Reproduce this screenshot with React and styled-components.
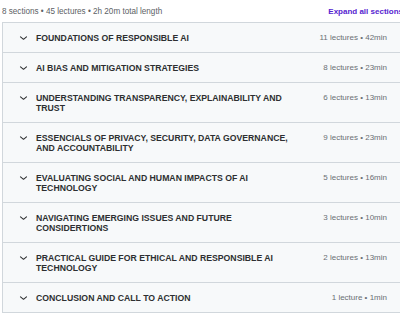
import React from "react";
import styled, { createGlobalStyle } from "styled-components";

const GlobalStyle = createGlobalStyle`
  html, body {
    margin: 0;
    padding: 0;
    background: #ffffff;
    overflow: hidden;
  }

  body {
    font-family: "Liberation Sans", Arial, sans-serif;
    color: #2d2f31;
  }
`;

const Page = styled.div`
  width: 401px;
  padding-left: 2px;
`;

const SummaryBar = styled.div`
  height: 22px;
  display: flex;
  align-items: center;
  justify-content: space-between;
`;

const SummaryText = styled.span`
  font-size: 8.15px;
  color: #5c6165;
`;

const ExpandBtn = styled.button`
  margin: 0;
  padding: 0;
  border: none;
  background: none;
  font-family: inherit;
  font-size: 8px;
  font-weight: 700;
  color: #5624d0;
  cursor: pointer;
`;

const SectionList = styled.div`
  border: 1px solid #d1d7dc;
  border-top: none;
`;

const SectionHeader = styled.div`
  display: flex;
  align-items: flex-start;
  padding: 9.5px 15px 9.5px 16px;
  border-top: 1px solid #d1d7dc;
  background-color: #f7f9fa;
`;

const Chevron = styled.svg`
  flex: none;
  width: 9px;
  height: 10px;
  margin-right: 8px;
`;

const SectionTitle = styled.span`
  flex: 0 1 266px;
  font-size: 8.7px;
  line-height: 10px;
  font-weight: 700;
  text-transform: uppercase;
  color: #2d2f31;
`;

const SectionMeta = styled.span`
  flex: none;
  margin-left: auto;
  font-size: 8px;
  line-height: 10px;
  color: #6a6f73;
`;

const sections = [
  { title: "Foundations of Responsible AI", lectures: 11, length: "42min" },
  { title: "AI Bias and Mitigation Strategies", lectures: 8, length: "23min" },
  {
    title: "Understanding Transparency, Explainability and Trust",
    lectures: 6,
    length: "13min",
  },
  {
    title: "Essencials of Privacy, Security, Data Governance, and Accountability",
    lectures: 9,
    length: "23min",
  },
  {
    title: "Evaluating Social and Human Impacts of AI Technology",
    lectures: 5,
    length: "16min",
  },
  {
    title: "Navigating Emerging Issues and Future Considertions",
    lectures: 3,
    length: "10min",
  },
  {
    title: "Practical Guide for Ethical and Responsible AI Technology",
    lectures: 2,
    length: "13min",
  },
  { title: "Conclusion and Call to Action", lectures: 1, length: "1min" },
];

const ChevronIcon = () => (
  <Chevron viewBox="0 0 9 10">
    <polyline
      points="1.5,3.8 4.5,6.3 7.5,3.8"
      fill="none"
      stroke="#2d2f31"
      strokeWidth="1.1"
      strokeLinecap="round"
      strokeLinejoin="round"
    />
  </Chevron>
);

const App = () => {
  return (
    <Page>
      <GlobalStyle />
      <SummaryBar>
        <SummaryText>8 sections • 45 lectures • 2h 20m total length</SummaryText>
        <ExpandBtn>Expand all sections</ExpandBtn>
      </SummaryBar>
      <SectionList>
        {sections.map((section) => (
          <SectionHeader key={section.title}>
            <ChevronIcon />
            <SectionTitle>{section.title}</SectionTitle>
            <SectionMeta>
              {section.lectures} {section.lectures === 1 ? "lecture" : "lectures"} •{" "}
              {section.length}
            </SectionMeta>
          </SectionHeader>
        ))}
      </SectionList>
    </Page>
  );
};

export default App;
